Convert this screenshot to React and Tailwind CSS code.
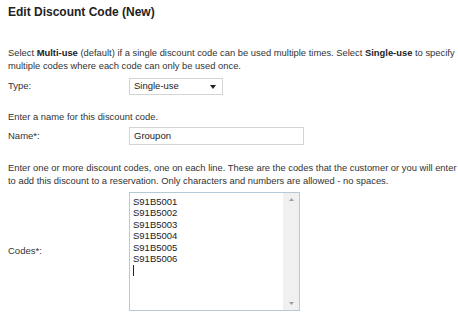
import React from "react";

export default function App() {
  const codes = ["S91B5001", "S91B5002", "S91B5003", "S91B5004", "S91B5005", "S91B5006"];
  return (
    <div className="w-[458px] h-[320px] overflow-hidden bg-white pl-2 pr-[1px] font-['Liberation_Sans',Arial,sans-serif] text-[#333]">
      <h1 className="pt-[5px] text-[12px] font-bold leading-[14px] text-[#222]">Edit Discount Code (New)</h1>

      <p className="mt-[27px] text-[9.4px] leading-[13px]">
        Select <b className="text-[#222]">Multi-use</b> (default) if a single discount code can be used multiple times. Select{" "}
        <b className="text-[#222]">Single-use</b> to specify multiple codes where each code can only be used once.
      </p>

      <div className="mt-[6px] flex items-center text-[9.5px]">
        <span className="w-[121px]">Type:</span>
        <div className="flex h-[17px] w-[94px] items-center justify-between border border-[#d4d4d4] pl-[4px] pr-[6px] text-[#222]">
          <span>Single-use</span>
          <svg width="6" height="4" viewBox="0 0 6 4">
            <polygon points="0,0 6,0 3,4" fill="#222" />
          </svg>
        </div>
      </div>

      <p className="mt-[15px] text-[9.4px] leading-[13px]">Enter a name for this discount code.</p>

      <div className="mt-[4px] flex items-center text-[9.5px]">
        <span className="w-[121px]">Name*:</span>
        <div className="flex h-[18px] w-[175px] items-center border border-[#d4d4d4] pl-[4px] text-[#222]">Groupon</div>
      </div>

      <p className="mt-[16px] text-[9.4px] leading-[13px]">
        Enter one or more discount codes, one on each line. These are the codes that the customer or you will enter to add this discount to a reservation. Only characters and numbers are allowed - no spaces.
      </p>

      <div className="mt-[5px] flex items-center text-[9.5px]">
        <span className="w-[121px]">Codes*:</span>
        <div className="flex h-[119px] w-[171px] border border-[#b5c9d8]">
          <div className="flex-1 pl-[3px] pt-[3px] leading-[11.4px] text-[#222]">
            {codes.map((c) => (
              <div key={c}>{c}</div>
            ))}
            <div className="mt-[1px] h-[11px] w-px bg-[#222]" />
          </div>
          <div className="flex w-[16px] flex-col items-center justify-between bg-[#f0f0f0] py-[5px]">
            <svg width="5" height="3" viewBox="0 0 5 3">
              <polygon points="2.5,0 5,3 0,3" fill="#a0a0a0" />
            </svg>
            <svg width="5" height="3" viewBox="0 0 5 3">
              <polygon points="0,0 5,0 2.5,3" fill="#a0a0a0" />
            </svg>
          </div>
        </div>
      </div>
    </div>
  );
}
